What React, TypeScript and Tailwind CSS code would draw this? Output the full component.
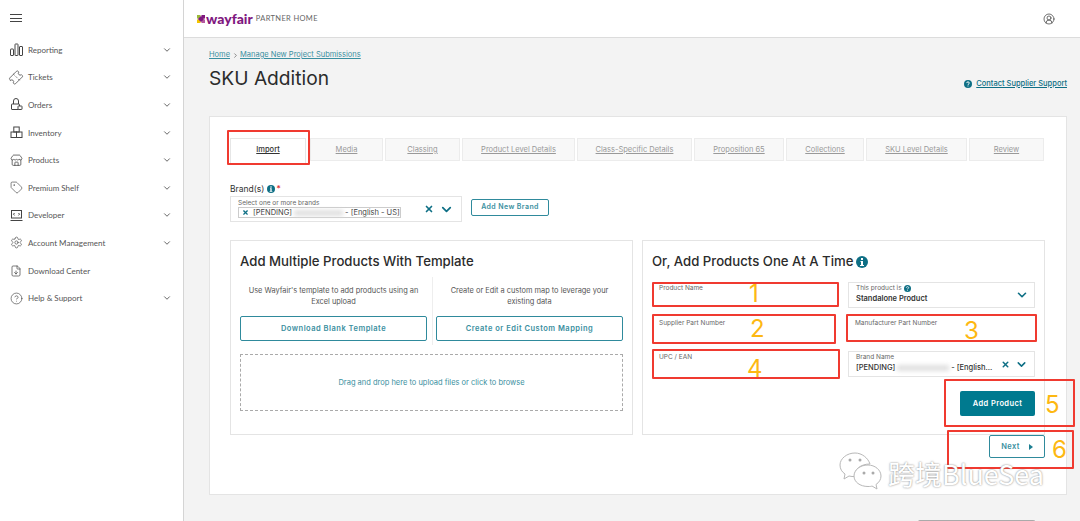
import { ChevronDown, ChevronRight, Ticket, Store, Tag, Settings, FileDown, CircleHelp, X, CircleUserRound } from 'lucide-react';

function ReportingIcon() {
  return (
    <svg width="13" height="13" viewBox="0 0 13 13" fill="none" stroke="#444" strokeWidth="1">
      <rect x="0.5" y="6" width="3" height="6.5" rx="0.5" />
      <rect x="5" y="1" width="3" height="11.5" rx="0.5" />
      <rect x="9.500" y="3.500" width="3" height="9" rx="0.5" />
    </svg>
  );
}

function OrdersIcon() {
  return (
    <svg width="13" height="13" viewBox="0 0 13 13" fill="none" stroke="#444" strokeWidth="1">
      <path d="M3.500 6V3a2.500 2.500 0 0 1 5 0v3" />
      <rect x="1.500" y="6" width="8" height="5.500" rx="0.5" />
      <rect x="8" y="8" width="4" height="3.500" rx="0.5" fill="#fff" />
    </svg>
  );
}

function InventoryIcon() {
  return (
    <svg width="13" height="13" viewBox="0 0 13 13" fill="none" stroke="#444" strokeWidth="1">
      <rect x="3.800" y="1" width="5.400" height="5" />
      <rect x="1" y="6" width="5.500" height="5.500" />
      <rect x="6.500" y="6" width="5.500" height="5.500" />
    </svg>
  );
}

function DeveloperIcon() {
  return (
    <svg width="13" height="13" viewBox="0 0 13 13" fill="none" stroke="#444" strokeWidth="1">
      <rect x="1.500" y="1.500" width="10" height="7.500" />
      <path d="M0.500 11.500h12M4.500 4l-1 1.200 1 1.200M8.500 4l1 1.200-1 1.200" />
    </svg>
  );
}

function WayfairMark() {
  return (
    <svg width="8" height="8" viewBox="0 0 9 9">
      <path d="M0 0h4v4H0z" fill="#9bb83a" />
      <path d="M5 0h4v4H5z" fill="#7f187f" />
      <path d="M0 5h4v4H0z" fill="#f2c400" />
      <path d="M5 5h4v4H5z" fill="#b5589f" />
      <path d="M4.500 1l3.500 3.500-3.500 3.500L1 4.500z" fill="#7f187f" />
    </svg>
  );
}

// solid teal circle with a white "i"
function InfoDot({ size }: { size: number }) {
  return (
    <svg width={size} height={size} viewBox="0 0 12 12" className="shrink-0">
      <circle cx="6" cy="6" r="6" fill="#0e6f85" />
      <rect x="5" y="2" width="2" height="2" fill="#fff" />
      <path d="M4.500 5h2.500v4h1v1h-4V9h1V6h-.5z" fill="#fff" />
    </svg>
  );
}

// solid teal circle with a white "?"
function HelpDot({ size }: { size: number }) {
  return (
    <svg width={size} height={size} viewBox="0 0 12 12" className="shrink-0">
      <circle cx="6" cy="6" r="6" fill="#0e6f85" />
      <path d="M4 4.600C4 3.400 5 2.800 6 2.800s2 .6 2 1.700c0 1.500-2 1.400-2 2.900" fill="none" stroke="#fff" strokeWidth="1.400" />
      <rect x="5.300" y="8.300" width="1.400" height="1.400" fill="#fff" />
    </svg>
  );
}

const navItems = [
  { label: 'Reporting', icon: <ReportingIcon />, more: true },
  { label: 'Tickets', icon: <Ticket size={15} strokeWidth={1.2} color="#444" className="-rotate-45" />, more: true },
  { label: 'Orders', icon: <OrdersIcon />, more: true },
  { label: 'Inventory', icon: <InventoryIcon />, more: true },
  { label: 'Products', icon: <Store size={13} strokeWidth={1.4} color="#444" />, more: true },
  { label: 'Premium Shelf', icon: <Tag size={13} strokeWidth={1.2} color="#444" />, more: true },
  { label: 'Developer', icon: <DeveloperIcon />, more: true },
  { label: 'Account Management', icon: <Settings size={13} strokeWidth={1.2} color="#444" />, more: true },
  { label: 'Download Center', icon: <FileDown size={12} strokeWidth={1.4} color="#444" />, more: false },
  { label: 'Help & Support', icon: <CircleHelp size={13} strokeWidth={1.2} color="#444" />, more: true },
];

const tabs = [
  { label: 'Media', w: 'w-[73px]' },
  { label: 'Classing', w: 'w-[75px]' },
  { label: 'Product Level Details', w: 'w-[113px]' },
  { label: 'Class-Specific Details', w: 'w-[115px]' },
  { label: 'Proposition 65', w: 'w-[90px]' },
  { label: 'Collections', w: 'w-[78px]' },
  { label: 'SKU Level Details', w: 'w-[101px]' },
  { label: 'Review', w: 'w-[75px]' },
];

function Field({ label }: { label: string }) {
  return <div className="h-[26px] pl-[7px] pt-[2px] text-[6.5px] leading-[9px] text-[#666]">{label}</div>;
}

function RedBox({ className }: { className: string }) {
  return <div className={`absolute rounded-[1px] border-2 border-[#f03a30] ${className}`} />;
}

function Num({ children, className }: { children: string; className: string }) {
  return <div className={`absolute text-[24px] leading-[24px] text-[#fdb812] ${className}`}>{children}</div>;
}

export default function App() {
  return (
    <div className="relative flex h-[521px] w-[1080px] overflow-hidden bg-[#f3f3f3] font-['Inter',sans-serif]">
      <aside className="h-full w-[184px] shrink-0 border-r border-[#d4d4d4] bg-white">
        <div className="flex h-[36px] flex-col justify-center gap-[2.5px] pl-[10px]">
          <span className="h-px w-[12px] bg-[#444]" />
          <span className="h-px w-[12px] bg-[#444]" />
          <span className="h-px w-[12px] bg-[#444]" />
        </div>
        <nav className="flex flex-col pl-[9px] pr-[11px]">
          {navItems.map((item) => (
            <div key={item.label} className="flex h-[27.6px] items-center font-['Lato',sans-serif] text-[8px] text-[#555]">
              <span className="mr-[5px] flex w-[14px] shrink-0 items-center justify-center">{item.icon}</span>
              <span className="flex-1">{item.label}</span>
              {item.more && <ChevronDown size={10} strokeWidth={1.8} color="#333" />}
            </div>
          ))}
        </nav>
      </aside>

      <div className="flex min-w-0 flex-1 flex-col">
        <header className="flex h-[38px] shrink-0 items-center justify-between border-b border-[#dcdcdc] bg-white pl-[13px] pr-[25px]">
          <div className="flex items-center">
            <WayfairMark />
            <span className="ml-[1px] font-['Lato',sans-serif] text-[14px] font-black leading-none text-[#7f187f]">wayfair</span>
            <span className="ml-[3px] font-['Lato',sans-serif] text-[7.5px] tracking-[0.35px] text-[#666]">PARTNER HOME</span>
          </div>
          <CircleUserRound size={12} strokeWidth={1.4} color="#333" />
        </header>

        <main className="flex-1 pl-[25px] pr-[13px]">
          <div className="flex h-[78px] items-start justify-between">
            <div>
              <div className="mt-[12px] flex items-center text-[7.5px] leading-[10px] text-[#3a8fa0]">
                <span className="underline">Home</span>
                <ChevronRight size={7} strokeWidth={2} color="#444" className="mx-[1.5px]" />
                <span className="underline">Manage New Project Submissions</span>
              </div>
              <h1 className="mt-[5px] text-[19.2px] font-normal leading-[26px] text-[#2b2b2b]">SKU Addition</h1>
            </div>
            <div className="mt-[40px] flex items-center gap-[4px] text-[7.5px] font-medium text-[#0e6f85]">
              <HelpDot size={8} />
              <span className="underline">Contact Supplier Support</span>
            </div>
          </div>

          <section className="h-[379px] w-[858px] border border-[#e4e4e4] bg-white pl-[20px] pt-[21px]">
            <div className="flex gap-[2px]">
              <div className="flex h-[25px] w-[76px] items-center justify-center border border-b-0 border-[#e6e6e6] bg-white pb-[2px] text-[7.5px] font-medium text-[#333] underline">
                Import
              </div>
              <div className="ml-[2px] flex gap-[2px]">
                {tabs.map((tab) => (
                  <div key={tab.label} className={`flex h-[23px] items-center justify-center border border-[#ececec] bg-[#f8f8f8] text-[7.5px] text-[#999] underline ${tab.w}`}>
                    {tab.label}
                  </div>
                ))}
              </div>
            </div>

            <div className="mt-[20px] flex items-center text-[8.5px] leading-[12px] text-[#333]">
              Brand(s)
              <span className="ml-[3px]"><InfoDot size={8} /></span>
              <span className="ml-[1px] text-[#d33]">*</span>
            </div>
            <div className="mt-[1px] flex items-center">
              <div className="flex h-[26px] w-[232px] items-center justify-between border border-[#e4e4e4] pl-[7px] pr-[7px]">
                <div>
                  <div className="text-[6.5px] leading-[6px] text-[#666]">Select one or more brands</div>
                  <div className="mt-[1px] flex h-[11px] w-[163px] items-center border border-[#ccc] pl-[3px] text-[7.5px] text-[#444]">
                    <X size={7} strokeWidth={4} color="#0e6f85" />
                    <span className="ml-[4px]">[PENDING]</span>
                    <span className="mx-[2px] h-[6px] w-[49px] bg-[#e0e0e0] blur-[2px]" />
                    <span>- [English - US]</span>
                  </div>
                </div>
                <div className="flex items-center gap-[5px]">
                  <X size={10} strokeWidth={4} color="#0e6f85" />
                  <ChevronDown size={15} strokeWidth={2.8} color="#0e6f85" />
                </div>
              </div>
              <button className="mb-[3px] ml-[9px] flex h-[17px] w-[78px] items-center justify-center rounded-[2px] border-[1.5px] border-[#2f8a9c] text-[7px] font-semibold tracking-[0.4px] text-[#3a8fa0]">
                Add New Brand
              </button>
            </div>

            <div className="mt-[18px] flex gap-[9px]">
              <div className="h-[195px] w-[403px] border border-[#e4e4e4] px-[9px] pt-[12px]">
                <h2 className="text-[13.2px] font-medium leading-[17px] text-[#2b2b2b]">Add Multiple Products With Template</h2>
                <div className="mt-[7px] flex">
                  <div className="w-[192px] text-center">
                    <p className="h-[39px] pr-[5px] pt-[8px] text-[7.4px] leading-[11px] text-[#555]">Use Wayfair's template to add products using an Excel upload</p>
                    <button className="block h-[25px] w-[187px] rounded-[2px] border-[1.5px] border-[#2f8a9c] text-[7.5px] font-semibold tracking-[0.5px] text-[#3a8fa0]">
                      Download Blank Template
                    </button>
                  </div>
                  <div className="w-[191px] border-l border-[#eee] pb-[4px] pl-[3px] text-center">
                    <p className="h-[39px] px-[8px] pt-[8px] text-[7.4px] leading-[11px] text-[#555]">Create or Edit a custom map to leverage your existing data</p>
                    <button className="block h-[25px] w-[187px] rounded-[2px] border-[1.5px] border-[#2f8a9c] text-[7.5px] font-semibold tracking-[0.5px] text-[#3a8fa0]">
                      Create or Edit Custom Mapping
                    </button>
                  </div>
                </div>
                <div className="mt-[9px] flex h-[57px] w-[383px] items-center justify-center border border-dashed border-[#aaa] text-[7.5px] text-[#3a8fa0]">
                  Drag and drop here to upload files or click to browse
                </div>
              </div>

              <div className="h-[195px] w-[403px] border border-[#e4e4e4] pl-[9px] pt-[12px]">
                <h2 className="flex items-center gap-[3px] text-[13.2px] font-medium leading-[17px] text-[#2b2b2b]">
                  Or, Add Products One At A Time <InfoDot size={12} />
                </h2>
                <div className="mt-[12px] grid w-[383px] grid-cols-[183px_187px] gap-x-[13px] gap-y-[8.5px]">
                  <Field label="Product Name" />
                  <div className="relative h-[26px] border border-[#e4e4e4] pl-[7px] pt-[1px]">
                    <div className="flex items-center gap-[2px] text-[6.5px] leading-[9px] text-[#666]">
                      This product is <HelpDot size={7} />
                    </div>
                    <div className="text-[7.5px] font-semibold leading-[11px] text-[#333]">Standalone Product</div>
                    <ChevronDown size={14} strokeWidth={2.8} color="#0e6f85" className="absolute right-[5px] top-[5px]" />
                  </div>
                  <Field label="Supplier Part Number" />
                  <Field label="Manufacturer Part Number" />
                  <Field label="UPC / EAN" />
                  <div className="relative h-[26px] border border-[#e4e4e4] pl-[7px] pt-[1px]">
                    <div className="text-[6.5px] leading-[9px] text-[#666]">Brand Name</div>
                    <div className="flex items-center text-[7.5px] font-medium leading-[11px] text-[#333]">
                      [PENDING]
                      <span className="mx-[2px] h-[6px] w-[52px] bg-[#e0e0e0] blur-[2px]" />
                      - [English...
                    </div>
                    <div className="absolute right-[6px] top-[6px] flex items-center gap-[5px]">
                      <X size={9} strokeWidth={4} color="#0e6f85" />
                      <ChevronDown size={13} strokeWidth={2.8} color="#0e6f85" />
                    </div>
                  </div>
                </div>
                <div className="mt-[14px] flex w-[383px] justify-end">
                  <button className="h-[25px] w-[75px] rounded-[2px] bg-[#007a8f] text-[7.5px] font-semibold tracking-[0.4px] text-white">Add Product</button>
                </div>
              </div>
            </div>
            <div className="ml-[759px] flex h-[23px] w-[56px] items-center justify-center gap-[9px] rounded-[2px] border-[1.5px] border-[#2f8a9c] bg-white text-[7.5px] font-semibold tracking-[0.4px] text-[#3a8fa0]">
              Next <span className="h-0 w-0 border-y-[3px] border-l-[4px] border-y-transparent border-l-[#1e7f92]" />
            </div>
          </section>
          <div className="ml-[709px] mt-[25px] h-[6px] w-[117px] rounded-t-[2px] border border-b-0 border-[#aaa] bg-[#e4e4e4]" />
        </main>
      </div>

      {/* annotations drawn over the screenshot */}
      <RedBox className="left-[227px] top-[130px] h-[35px] w-[83px]" />
      <RedBox className="left-[652px] top-[282px] h-[25px] w-[187px]" />
      <RedBox className="left-[652px] top-[314px] h-[30px] w-[184px]" />
      <RedBox className="left-[846px] top-[314px] h-[28px] w-[191px]" />
      <RedBox className="left-[652px] top-[349px] h-[30px] w-[188px]" />
      <RedBox className="left-[944px] top-[379px] h-[48px] w-[131px]" />
      <RedBox className="left-[947px] top-[430px] h-[39px] w-[127px]" />
      <Num className="left-[749px] top-[282px]">1</Num>
      <Num className="left-[750px] top-[317px]">2</Num>
      <Num className="left-[964px] top-[319px]">3</Num>
      <Num className="left-[747px] top-[357px]">4</Num>
      <Num className="left-[1045px] top-[393px]">5</Num>
      <Num className="left-[1052px] top-[438px]">6</Num>
      <div className="absolute left-[888px] top-[459px] font-['Noto_Sans_CJK_SC','Lato',sans-serif] text-[27px] leading-[30px] text-white [text-shadow:0_0_2px_#777]">
        跨境BlueSea
      </div>
      <svg className="absolute left-[839px] top-[452px]" width="44" height="38" viewBox="0 0 44 38" fill="#fff" stroke="#b8b8b8" strokeWidth="1">
        <path d="M16 1C8 1 1 6.500 1 13c0 4 2 7 5 9l-1 5 5-3c2 .5 4 .7 6 .5C15 18 21 12 31 12 29 6 23 1 16 1z" />
        <path d="M29 13c-8 0-14 5-14 11s6 10.500 14 10.500c2 0 3 0 4-.5l5 3-1-4.500c3-2 5-5 5-8.500 0-6-6-11-13-11z" />
        <g fill="#aaa" stroke="none">
          <circle cx="11" cy="8" r="1.500" /><circle cx="21" cy="8" r="1.500" /><circle cx="25" cy="21" r="1.500" /><circle cx="34" cy="21" r="1.500" />
        </g>
      </svg>
    </div>
  );
}
